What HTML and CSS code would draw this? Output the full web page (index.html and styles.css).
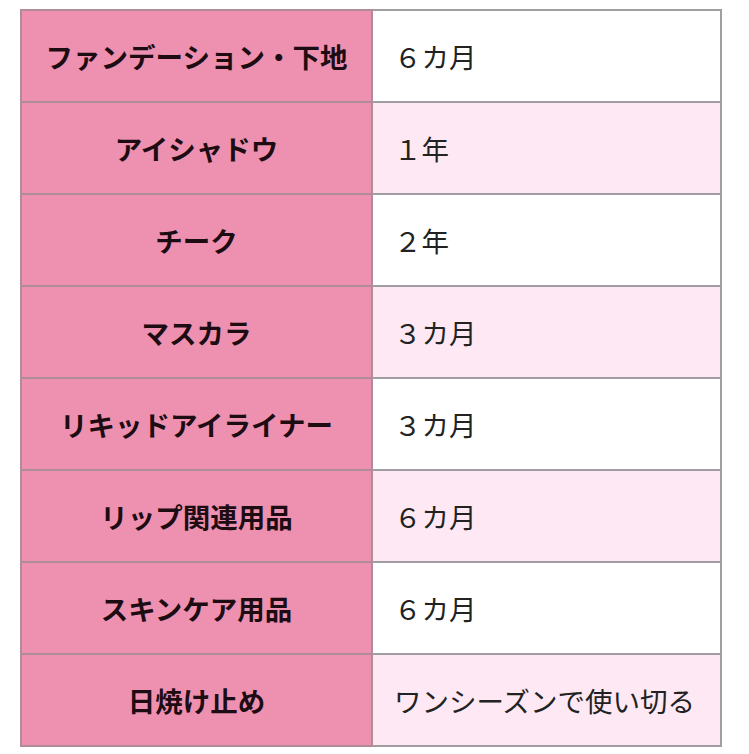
FILE: index.html
```html
<!DOCTYPE html>
<html lang="ja">
<head>
<meta charset="utf-8">
<link rel="stylesheet" href="styles.css">
</head>
<body>
<table class="shelf">
  <tbody>
    <tr><th>ファンデーション・下地</th><td>６カ月</td></tr>
    <tr class="alt"><th>アイシャドウ</th><td>１年</td></tr>
    <tr><th>チーク</th><td>２年</td></tr>
    <tr class="alt"><th>マスカラ</th><td>３カ月</td></tr>
    <tr><th>リキッドアイライナー</th><td>３カ月</td></tr>
    <tr class="alt"><th>リップ関連用品</th><td>６カ月</td></tr>
    <tr><th>スキンケア用品</th><td>６カ月</td></tr>
    <tr class="alt"><th>日焼け止め</th><td>ワンシーズンで使い切る</td></tr>
  </tbody>
</table>
</body>
</html>
```

FILE: styles.css
```css
html, body {
  margin: 0;
  padding: 0;
  background: #ffffff;
}
body {
  padding: 9px 0 0 20px;
  font-family: "Noto Sans CJK JP", "Noto Sans", sans-serif;
}
.shelf {
  width: 702px;
  border-collapse: collapse;
  table-layout: fixed;
}
.shelf th,
.shelf td {
  height: 90px;
  padding: 0;
  border: 2px solid #a09ea0;
  font-size: 27.5px;
  line-height: 1.2;
  vertical-align: middle;
}
.shelf th {
  width: 349px;
  background: #ee91b1;
  color: #1d0c12;
  font-weight: 700;
  text-align: center;
  border-color: #b08c9a;
}
.shelf td {
  background: #ffffff;
  color: #222222;
  font-weight: 400;
  text-align: left;
  padding-left: 21px;
}
.shelf tr.alt td {
  background: #fde8f3;
}
```
